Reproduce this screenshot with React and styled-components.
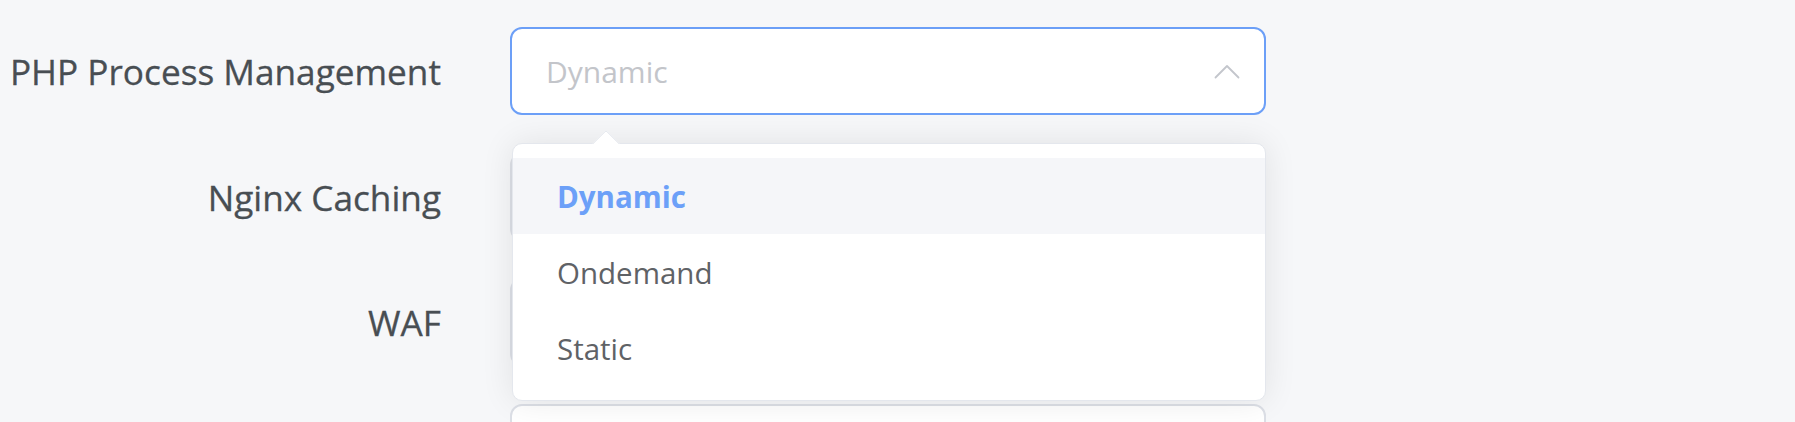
import { createGlobalStyle } from "styled-components";
import styled from "styled-components";

const GlobalStyle = createGlobalStyle`
  html, body {
    margin: 0;
    overflow: hidden;
    background: #f6f7f9;
  }
  body {
    font-family: "Open Sans", "Noto Sans", sans-serif;
  }
`;

const Form = styled.div`
  padding-top: 27px;
`;

const Row = styled.div`
  display: flex;
  align-items: center;
  height: 88px;
  margin-bottom: 37.5px;
`;

const Label = styled.div`
  width: 441px;
  margin-right: 69px;
  text-align: right;
  font-size: 35.2px;
  color: #484e53;
  white-space: nowrap;
  -webkit-text-stroke: 0.3px #484e53;
`;

const Field = styled.div`
  position: relative;
  width: 756px;
  height: 88px;
`;

const SelectBox = styled.div`
  box-sizing: border-box;
  height: 100%;
  display: flex;
  align-items: center;
  justify-content: space-between;
  padding: 0 24px 0 34px;
  background: #fff;
  border: 2px solid ${(p) => (p.$open ? "#6c9ff7" : "#dcdfe6")};
  border-radius: 12px;
`;

const Placeholder = styled.span`
  font-size: 30px;
  color: #c3c5ca;
`;

const Dropdown = styled.div`
  position: absolute;
  top: calc(100% + 28px);
  left: 2px;
  right: 0;
  z-index: 10;
  box-sizing: border-box;
  padding: 14px 0;
  background: #fff;
  border: 1px solid #e4e7ed;
  border-radius: 10px;
  box-shadow: 0 0 33px rgba(0, 0, 0, 0.09);
`;

const Arrow = styled.div`
  position: absolute;
  top: -10px;
  left: 83px;
  width: 18px;
  height: 18px;
  background: #fff;
  border: 1px solid #e4e7ed;
  border-right-color: transparent;
  border-bottom-color: transparent;
  border-top-left-radius: 2px;
  transform: rotate(45deg);
`;

const Option = styled.div`
  height: 76px;
  display: flex;
  align-items: center;
  padding-left: 44px;
  font-size: 29.5px;
  background: ${(p) => (p.$active ? "#f5f6f9" : "transparent")};
  color: ${(p) => (p.$active ? "#6ca0f8" : "#5f6266")};
  font-weight: ${(p) => (p.$active ? 700 : 400)};
`;

const Chevron = () => (
  <svg width="26" height="15" viewBox="0 0 26 15" fill="none">
    <polyline
      points="1.5,13.5 13,2 24.5,13.5"
      stroke="#c3c6cc"
      strokeWidth="1.8"
      strokeLinejoin="round"
      strokeLinecap="round"
    />
  </svg>
);

const options = ["Dynamic", "Ondemand", "Static"];

export default function App() {
  return (
    <>
      <GlobalStyle />
      <Form>
        <Row>
          <Label>PHP Process Management</Label>
          <Field>
            <SelectBox $open>
              <Placeholder>Dynamic</Placeholder>
              <Chevron />
            </SelectBox>
            <Dropdown>
              <Arrow />
              {options.map((o) => (
                <Option key={o} $active={o === "Dynamic"}>
                  {o}
                </Option>
              ))}
            </Dropdown>
          </Field>
        </Row>
        <Row>
          <Label>Nginx Caching</Label>
          <Field>
            <SelectBox />
          </Field>
        </Row>
        <Row>
          <Label>WAF</Label>
          <Field>
            <SelectBox />
          </Field>
        </Row>
        <Row>
          <Label />
          <Field>
            <SelectBox />
          </Field>
        </Row>
      </Form>
    </>
  );
}
